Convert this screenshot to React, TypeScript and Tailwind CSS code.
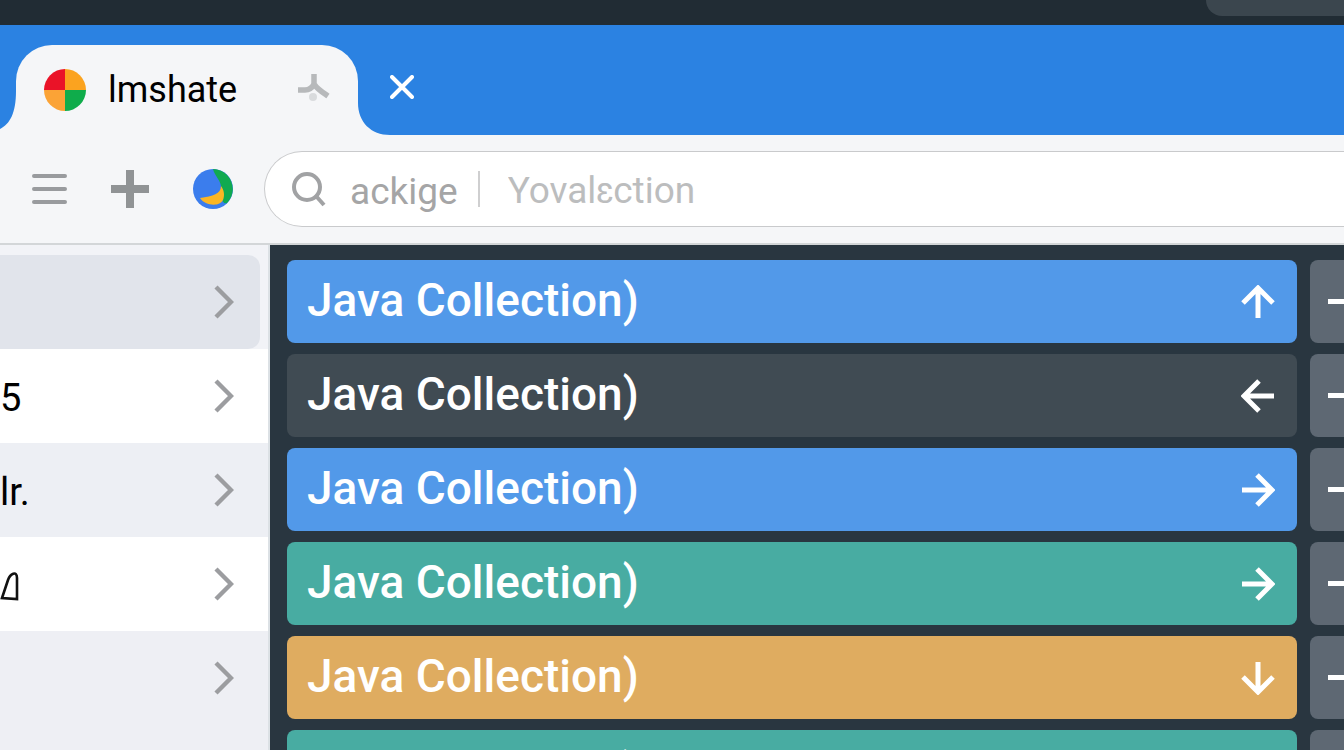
import React from "react";

type Direction = "up" | "left" | "right" | "down";

const arrowPaths: Record<Direction, string> = {
  up: "M17 33V3M2 18L17 3L32 18",
  left: "M33 17H3M18 2L3 17L18 32",
  right: "M1 17H31M16 2L31 17L16 32",
  down: "M17 1V31M2 16L17 31L32 16",
};

const Arrow = ({ direction }: { direction: Direction }) => (
  <svg viewBox="0 0 34 34" className="size-[34px]" fill="none" stroke="currentColor" strokeWidth="5" aria-hidden="true">
    <path d={arrowPaths[direction]} />
  </svg>
);

const collections: { color: string; direction: Direction }[] = [
  { color: "bg-[#5299e9]", direction: "up" },
  { color: "bg-[#404b53]", direction: "left" },
  { color: "bg-[#5299e9]", direction: "right" },
  { color: "bg-[#48aca2]", direction: "right" },
  { color: "bg-[#dfac60]", direction: "down" },
  { color: "bg-[#48aca2]", direction: "down" },
];

const Wedge = () => (
  <svg viewBox="0 0 20 30" className="h-[30px] w-5" fill="none" stroke="#111" strokeWidth="2.6" aria-hidden="true">
    <path d="M2 27L8 9C10 3 17 -1 17 7V28Z" />
  </svg>
);

const sideItems: { name: string; content: React.ReactNode; tone: string }[] = [
  { name: "5", content: "5", tone: "bg-white" },
  { name: "lr.", content: "lr.", tone: "bg-[#edeff4]" },
  { name: "Shape", content: <Wedge />, tone: "bg-white" },
  { name: "More", content: null, tone: "bg-[#eeeff4]" },
];

const Chevron = () => (
  <svg viewBox="0 0 20 34" className="ml-auto h-[34px] w-5 shrink-0" fill="none" stroke="#9c9da0" strokeWidth="4.4" aria-hidden="true">
    <path d="M2 2L17 17L2 32" />
  </svg>
);

function TabStrip() {
  return (
    <div className="flex h-[110px] shrink-0 items-end bg-[#2b82e2]">
      <svg viewBox="0 0 16 44" className="h-11 w-4 shrink-0" fill="#f5f6f8" aria-hidden="true">
        <path d="M16 0V44H0V38C10 33 16 22 16 0Z" />
      </svg>
      <div className="flex h-[90px] w-[342px] shrink-0 items-center rounded-t-[36px] bg-[#f5f6f8] px-7">
        <svg viewBox="0 0 42 42" className="size-[42px]" aria-hidden="true">
          <path d="M21 21V0A21 21 0 0 0 0 21Z" fill="#ea1328" />
          <path d="M21 21H42A21 21 0 0 0 21 0Z" fill="#fba31f" />
          <path d="M21 21V42A21 21 0 0 0 42 21Z" fill="#0fac4b" />
          <path d="M21 21H0A21 21 0 0 0 21 42Z" fill="#fba336" />
        </svg>
        <span className="ml-[22px] text-4xl leading-none text-black">lmshate</span>
        <svg viewBox="0 0 32 30" className="mb-1 ml-auto h-[30px] w-8" fill="none" stroke="#b7b9bb" strokeWidth="5.5" strokeLinejoin="round" aria-hidden="true">
          <circle cx="15" cy="24" r="4" fill="#d9dbdd" stroke="none" />
          <path d="M16 1V12M0 17H7C11 17 14 15 16 11C19 16 24 19 30 23" />
        </svg>
      </div>
      <svg viewBox="0 0 32 32" className="size-8 shrink-0" fill="#f5f6f8" aria-hidden="true">
        <path d="M0 0C0 19 13 32 32 32H0Z" />
      </svg>
      <button aria-label="Close tab" className="mb-9 flex text-white">
        <svg viewBox="0 0 24 24" className="size-6" fill="none" stroke="currentColor" strokeWidth="4" strokeLinecap="round">
          <path d="M2 2L22 22M22 2L2 22" />
        </svg>
      </button>
    </div>
  );
}

function Toolbar() {
  return (
    <div className="flex h-[110px] shrink-0 items-center border-b-2 border-[#d3d6d8] bg-[#f5f6f8] pl-8">
      <button aria-label="Menu" className="mr-11 flex">
        <svg viewBox="0 0 35 30" className="h-[30px] w-[35px]" fill="none" stroke="#999b9e" strokeWidth="4" strokeLinecap="round">
          <path d="M2 2H33M2 15H33M2 28H33" />
        </svg>
      </button>
      <button aria-label="New" className="mr-11 flex">
        <svg viewBox="0 0 38 38" className="size-[38px]" fill="none" stroke="#909395" strokeWidth="8">
          <path d="M19 0V38M0 19H38" />
        </svg>
      </button>
      <button aria-label="Browser" className="mr-[31px] flex">
        <svg viewBox="0 0 40 40" className="size-10">
          <circle cx="20" cy="20" r="20" fill="#3b7ded" />
          <path d="M20 0A20 20 0 0 1 34 34C30 36 27 28 28 20C29 12 22 8 20 0Z" fill="#10aa50" />
          <path d="M28 17C28 25 20 27 7 29C12 37 27 38 30 31C32 26 31 21 28 17Z" fill="#fbb624" />
        </svg>
      </button>
      <div className="flex h-[76px] min-w-0 flex-1 items-center rounded-l-full border-y border-l border-[#c9cacc] bg-white pl-[27px]">
        <svg viewBox="0 0 34 36" className="h-9 w-[34px] shrink-0" fill="none" stroke="#a1a2a4" strokeWidth="4" aria-hidden="true">
          <circle cx="15" cy="16" r="13" />
          <path d="M24 25L32 34" />
        </svg>
        <label htmlFor="search" className="ml-6 pt-1 text-[37px] leading-none text-[#a5a5a6]">ackige</label>
        <span className="ml-5 h-9 w-[2px] bg-[#cfcfd0]" />
        <input id="search" placeholder="Yovalɛction" className="ml-7 min-w-0 flex-1 bg-transparent pt-1 text-[37px] outline-none placeholder:text-[#bcbdbe]" />
      </div>
    </div>
  );
}

export default function App() {
  return (
    <div className="flex h-screen flex-col overflow-hidden bg-[#293640] font-['Roboto','Liberation_Sans',sans-serif]">
      <div className="flex h-[25px] shrink-0 justify-end bg-[#212c34]">
        <div className="h-4 w-[138px] rounded-bl-[36px] bg-[#3b464e]" />
      </div>
      <TabStrip />
      <Toolbar />
      <div className="flex min-h-0 flex-1">
        <nav className="flex w-[270px] shrink-0 flex-col border-r-2 border-[#dce1e5] bg-[#f2f3f7] pt-[10px]">
          <a href="#selected" aria-label="Selected" className="mr-2 flex h-[94px] shrink-0 items-center rounded-r-xl bg-[#e1e4eb] pr-[26px]">
            <Chevron />
          </a>
          {sideItems.map((item) => (
            <a key={item.name} href="#item" aria-label={item.name} className={`flex h-[94px] shrink-0 items-center pr-[34px] text-[38px] text-black ${item.tone}`}>
              <span className="pt-1">{item.content}</span>
              <Chevron />
            </a>
          ))}
          <div className="flex-1 bg-[#eeeff4]" />
        </nav>
        <main className="flex min-w-0 flex-1 flex-col gap-[11px] overflow-hidden pl-[17px] pt-[15px]">
          {collections.map((item, index) => (
            <div key={index} className="flex shrink-0 gap-[13px]">
              <button className={`flex h-[83px] min-w-0 flex-1 items-center justify-between rounded-lg pl-5 pr-[22px] text-white ${item.color}`}>
                <span className="pb-1 text-[46px] leading-none font-medium">Java Collection)</span>
                <Arrow direction={item.direction} />
              </button>
              <button aria-label="Remove" className="flex h-[83px] w-[34px] items-center justify-end rounded-l-lg bg-[#5e6873]">
                <span className="h-[5px] w-4 bg-white" />
              </button>
            </div>
          ))}
        </main>
      </div>
    </div>
  );
}
